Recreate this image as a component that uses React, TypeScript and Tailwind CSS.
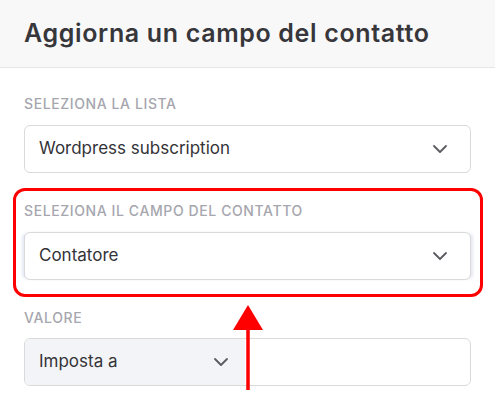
import { ChevronDown } from "lucide-react";

function Label({ children }: { children: React.ReactNode }) {
  return (
    <div className="h-4 text-[14px] leading-4 font-medium uppercase tracking-[0.6px] text-[#a6a6ae]">
      {children}
    </div>
  );
}

function Select({ value, className = "" }: { value: string; className?: string }) {
  return (
    <div
      className={`flex h-[48px] items-center justify-between rounded-md border border-[#dadada] bg-white pl-[14px] pr-[18px] ${className}`}
    >
      <span className="text-[17px] text-[#333338]">{value}</span>
      <ChevronDown className="h-[24px] w-[24px] text-[#5a5a60]" strokeWidth={1.8} />
    </div>
  );
}

function RedArrow() {
  return (
    <svg
      className="pointer-events-none absolute left-[232px] top-[304px]"
      width="32"
      height="90"
      viewBox="0 0 32 90"
    >
      <polygon points="16,1 31,26 1,26" fill="#ff0000" />
      <rect x="14.25" y="25" width="3.5" height="61" fill="#ff0000" />
    </svg>
  );
}

export default function App() {
  return (
    <div
      className="relative h-[416px] w-[495px] overflow-hidden bg-white"
      style={{ fontFamily: "Inter, 'Liberation Sans', sans-serif" }}
    >
      <header className="flex h-[68px] items-center border-b border-[#e6e6e6] bg-[#f8f8f8] px-6">
        <h1 className="text-[25px] font-semibold tracking-[0.65px] text-[#36363b]">
          Aggiorna un campo del contatto
        </h1>
      </header>

      <main className="pl-6 pr-[24px] pt-[28px]">
        <Label>Seleziona la lista</Label>
        <Select value="Wordpress subscription" className="mt-[13px]" />

        <div className="-ml-[11px] -mr-[12px] mt-[15px] rounded-[12px] border-[3px] border-[#ff0000] pb-[14px] pl-[8px] pr-[9px] pt-[12px]">
          <Label>Seleziona il campo del contatto</Label>
          <Select
            value="Contatore"
            className="mt-[13px] shadow-[-3px_0_3px_-1px_#e6e8f4,3px_0_3px_-1px_#e6e8f4]"
          />
        </div>

        <div className="mt-[13px]">
          <Label>Valore</Label>
          <div className="mt-[12px] flex h-[48px] overflow-hidden rounded-md border border-[#dadada] bg-white">
            <div className="flex w-[220px] items-center justify-between bg-[#f3f4f7] pl-[14px] pr-[12px]">
              <span className="text-[17px] text-[#333338]">Imposta a</span>
              <ChevronDown className="h-[24px] w-[24px] text-[#5a5a60]" strokeWidth={1.8} />
            </div>
            <div className="flex-1" />
          </div>
        </div>
      </main>

      <RedArrow />
    </div>
  );
}
